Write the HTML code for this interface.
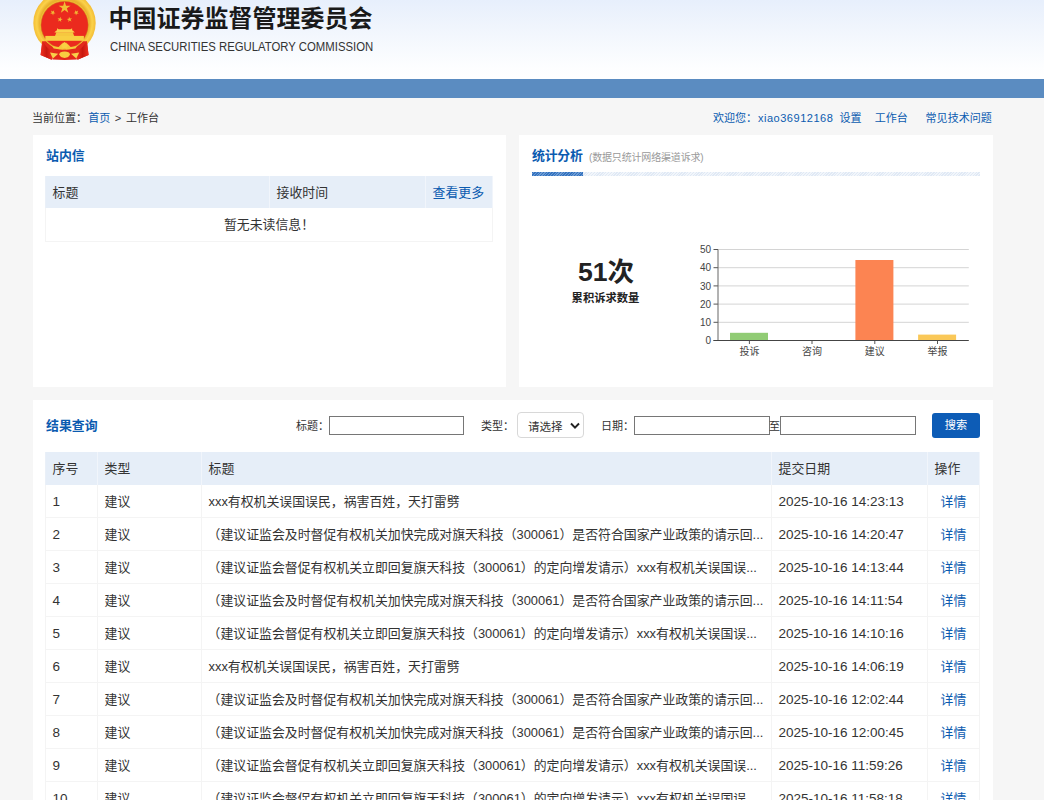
<!DOCTYPE html>
<html lang="zh-CN">
<head>
<meta charset="utf-8">
<title>中国证券监督管理委员会 - 工作台</title>
<style>
*{box-sizing:border-box;margin:0;padding:0}
html,body{width:1044px;height:800px;overflow:hidden}
body{position:relative;background:#f6f6f6;font-family:"Liberation Sans","Noto Sans CJK SC",sans-serif;font-size:13px;color:#333}
a{color:#0b5bb0;text-decoration:none}
.abs{position:absolute;white-space:nowrap}
#hdr{left:0;top:0;width:1044px;height:79px;background:linear-gradient(180deg,#e7effc 0%,#f3f7fd 45%,#fdfeff 85%,#ffffff 100%)}
#bar{left:0;top:79px;width:1044px;height:19px;background:#5b8cc1}
#ttl{left:108.5px;top:1.5px;font-size:24px;line-height:34px;font-weight:bold;color:#1a1a1a;letter-spacing:0}
#sub{left:110px;top:38.7px;font-size:12px;line-height:16px;color:#333;letter-spacing:0;transform-origin:0 0;transform:scaleX(0.945)}
.crumb{font-size:11.04px;line-height:16px;top:109.5px}
.panel{background:#fff}
.ptitle{font-size:12.88px;line-height:18px;font-weight:bold;color:#0b5bb0}
table{border-collapse:separate;border-spacing:0;table-layout:fixed;font-size:12.88px}
th,td{height:33px;padding:0 0 0 6.5px;text-align:left;font-weight:normal;border-right:1px solid #f4f4f4;border-bottom:1px solid #f4f4f4;white-space:nowrap;overflow:hidden;vertical-align:middle;line-height:18px}
th{height:33px;background:#e6eef8;border-right-color:#f1f5fb;border-bottom:none;color:#333}
td:first-child{border-left:1px solid #f4f4f4}
#res td{padding-top:1px}
th:first-child{border-left:1px solid #eaf0f8}
#msg th{height:32px;padding-top:1px}#msg td{height:34px}
td.op{text-align:center;padding:0}
td.dt{font-size:13.5px;letter-spacing:0}
#res td:first-child{font-size:13.5px}
.lbl{font-size:11.04px;line-height:16px;color:#333}
.inp{height:19px;border:1px solid #767676;background:#fff;border-radius:0;outline:none;font:inherit;font-size:11.04px;padding:0 2px;color:#333}
select.sel{appearance:none;-webkit-appearance:none;outline:none;font:inherit;font-size:11.5px;color:#333;padding:4px 0 0 10px;line-height:16px}
button.btn{border:none;outline:none;font:inherit;cursor:pointer;padding:0}
</style>
</head>
<body>
<div id="hdr" class="abs"></div>
<div id="bar" class="abs"></div>
<!--emblem--><svg class="abs" style="left:30px;top:0" width="70" height="64" viewBox="30 0 70 64">
<defs>
<radialGradient id="gd" cx="64.5" cy="23" r="31.5" gradientUnits="userSpaceOnUse"><stop offset="0.78" stop-color="#e9b22e"/><stop offset="0.88" stop-color="#fbd24a"/><stop offset="1" stop-color="#f3bb33"/></radialGradient>
<linearGradient id="rd" x1="0" y1="0" x2="1" y2="0"><stop offset="0" stop-color="#f0301f"/><stop offset="0.5" stop-color="#c8190f"/><stop offset="1" stop-color="#f0301f"/></linearGradient>
</defs>
<circle cx="64.5" cy="23" r="31.2" fill="url(#gd)"/>
<path d="M42.3 41.3 L40.6 55 L51.7 59.7 L52.5 58 L76.7 58 L77.5 59.7 L88.6 55 L86.9 41.3 Z" fill="#e22a1c"/>
<path d="M42.3 41.3 L40.6 55 L51.7 59.7 L52.6 52 Q46.5 48 42.3 41.3 Z" fill="url(#rd)"/>
<path d="M86.9 41.3 L88.6 55 L77.5 59.7 L76.6 52 Q82.7 48 86.9 41.3 Z" fill="url(#rd)"/>
<path d="M52 52 Q64.6 57.5 77.2 52 L76.8 59.6 Q64.6 60.4 52.4 59.6 Z" fill="#e3271b"/>
<circle cx="64.5" cy="25" r="24.7" fill="#f4c136"/>
<circle cx="64.6" cy="25" r="23.7" fill="#eb2a1e" stroke="#c9901f" stroke-width="0.5"/>
<polygon points="64.60,1.30 66.01,5.65 70.59,5.65 66.89,8.34 68.30,12.70 64.60,10.01 60.90,12.70 62.31,8.34 58.61,5.65 63.19,5.65" fill="#f1bd36"/>
<polygon points="54.20,10.18 53.78,12.16 55.54,13.18 53.52,13.39 53.09,15.38 52.27,13.53 50.24,13.74 51.75,12.38 50.93,10.52 52.69,11.54" fill="#f1bd36"/>
<polygon points="74.90,10.18 76.41,11.54 78.17,10.52 77.35,12.38 78.86,13.74 76.83,13.53 76.01,15.38 75.58,13.39 73.56,13.18 75.32,12.16" fill="#f1bd36"/>
<polygon points="60.49,16.74 60.77,18.76 62.77,19.11 60.94,20.00 61.23,22.02 59.81,20.55 57.99,21.45 58.94,19.65 57.53,18.19 59.53,18.54" fill="#f1bd36"/>
<polygon points="69.01,16.74 69.97,18.54 71.97,18.19 70.56,19.65 71.51,21.45 69.69,20.55 68.27,22.02 68.56,20.00 66.73,19.11 68.73,18.76" fill="#f1bd36"/>
<rect x="45.3" y="35.9" width="38.6" height="4.9" fill="#f8cf43"/>
<path d="M55 35.9 L56.4 32.2 L72.8 32.2 L74.2 35.9 Z" fill="#f6c83f"/>
<path d="M54.4 32.6 L56.3 30.6 L57 30.6 L57.1 28.3 L58.6 29.3 L70.6 29.3 L72.1 28.3 L72.2 30.6 L72.9 30.6 L74.8 32.6 Z" fill="#fad24a"/>
<path d="M52 46 L58.6 46.9 L61 44.4 L64.6 42.3 L68.2 44.4 L70.6 46.9 L77.2 46 L75.5 48.6 Q70 49.6 66.2 49.6 L64.6 48.6 L63 49.6 Q59 49.6 53.7 48.6 Z" fill="#f6c83c"/>
<polygon points="68.10,45.60 67.11,46.27 67.63,47.35 66.44,47.44 66.35,48.63 65.27,48.11 64.60,49.10 63.93,48.11 62.85,48.63 62.76,47.44 61.57,47.35 62.09,46.27 61.10,45.60 62.09,44.93 61.57,43.85 62.76,43.76 62.85,42.57 63.93,43.09 64.60,42.10 65.27,43.09 66.35,42.57 66.44,43.76 67.63,43.85 67.11,44.93" fill="#f9d143"/>
<path d="M59.3 54.2 Q59.6 51.8 64.6 51.6 Q69.6 51.8 69.9 54.2 L69.2 56 L67.6 57.3 L64.6 58 L61.6 57.3 L60 56 Z" fill="#f8cd40"/>
<path d="M50 52.5 L58.2 53.7 L52.9 58.4 Z" fill="#f8d04a"/>
<path d="M79.2 52.5 L71 53.7 L76.3 58.4 Z" fill="#f8d04a"/>
</svg>
<!--/emblem-->
<div id="ttl" class="abs">中国证券监督管理委员会</div>
<div id="sub" class="abs">CHINA SECURITIES REGULATORY COMMISSION</div>

<div class="abs crumb" style="left:32px">当前位置：</div>
<div class="abs crumb" style="left:88.3px"><a>首页</a></div>
<div class="abs crumb" style="left:114.7px">&gt;</div>
<div class="abs crumb" style="left:126px">工作台</div>
<div class="abs crumb" style="left:713px"><a>欢迎您：</a></div>
<div class="abs crumb" style="left:758px;letter-spacing:0.5px"><a>xiao36912168</a></div>
<div class="abs crumb" style="left:839.5px"><a>设置</a></div>
<div class="abs crumb" style="left:874.7px"><a>工作台</a></div>
<div class="abs crumb" style="left:925.6px"><a>常见技术问题</a></div>

<!-- panel 1 -->
<div class="abs panel" style="left:33px;top:135px;width:473px;height:252px"></div>
<div class="abs ptitle" style="left:46px;top:146.7px">站内信</div>
<table class="abs" id="msg" style="left:45px;top:176px;width:448px">
<colgroup><col style="width:225px"><col style="width:156px"><col style="width:67px"></colgroup>
<tr><th>标题</th><th>接收时间</th><th><a>查看更多</a></th></tr>
<tr><td colspan="3" style="text-align:center;padding:0">暂无未读信息！</td></tr>
</table>

<!-- panel 2 -->
<div class="abs panel" style="left:519px;top:135px;width:474px;height:252px"></div>
<div class="abs ptitle" style="left:532px;top:146.7px;letter-spacing:-0.25px">统计分析</div>
<div class="abs" style="left:589px;top:150.8px;font-size:10px;line-height:14px;color:#999;letter-spacing:-0.17px">(数据只统计网络渠道诉求)</div>

<div class="abs" style="left:532px;top:172px;width:448px;height:4px;background:repeating-linear-gradient(135deg,#e0e9f5 0,#e0e9f5 1px,#f2f6fb 1px,#f2f6fb 2px)"></div>
<div class="abs" style="left:532px;top:172px;width:51px;height:4px;background:repeating-linear-gradient(135deg,#3473c0 0,#3473c0 1px,#6d9bd3 1px,#6d9bd3 2px)"></div>
<div class="abs" style="left:556px;top:254px;width:100px;text-align:center;font-size:26.6px;line-height:36px;font-weight:bold;color:#222">51次</div>
<div class="abs" style="left:555.5px;top:289.6px;width:100px;text-align:center;font-size:11.3px;line-height:16px;font-weight:bold;color:#222">累积诉求数量</div>
<svg class="abs" id="chart" style="left:680px;top:235px" width="310" height="135" viewBox="680 235 310 135" font-family="'Liberation Sans','Noto Sans CJK SC',sans-serif" font-size="10" fill="#444">
<line x1="718" x2="968.8" y1="249.5" y2="249.5" stroke="#d4d4d4" stroke-width="1"/>
<line x1="713.5" x2="718" y1="249.5" y2="249.5" stroke="#555" stroke-width="1"/>
<text x="711" y="253.1" text-anchor="end">50</text>
<line x1="718" x2="968.8" y1="267.7" y2="267.7" stroke="#d4d4d4" stroke-width="1"/>
<line x1="713.5" x2="718" y1="267.7" y2="267.7" stroke="#555" stroke-width="1"/>
<text x="711" y="271.3" text-anchor="end">40</text>
<line x1="718" x2="968.8" y1="285.9" y2="285.9" stroke="#d4d4d4" stroke-width="1"/>
<line x1="713.5" x2="718" y1="285.9" y2="285.9" stroke="#555" stroke-width="1"/>
<text x="711" y="289.5" text-anchor="end">30</text>
<line x1="718" x2="968.8" y1="304.1" y2="304.1" stroke="#d4d4d4" stroke-width="1"/>
<line x1="713.5" x2="718" y1="304.1" y2="304.1" stroke="#555" stroke-width="1"/>
<text x="711" y="307.7" text-anchor="end">20</text>
<line x1="718" x2="968.8" y1="322.3" y2="322.3" stroke="#d4d4d4" stroke-width="1"/>
<line x1="713.5" x2="718" y1="322.3" y2="322.3" stroke="#555" stroke-width="1"/>
<text x="711" y="325.9" text-anchor="end">10</text>
<line x1="713.5" x2="718" y1="340.5" y2="340.5" stroke="#555" stroke-width="1"/>
<text x="711" y="344.1" text-anchor="end">0</text>
<line x1="718" x2="718" y1="249.5" y2="340.5" stroke="#666" stroke-width="1"/>
<rect x="730.0" y="332.8" width="38" height="7.7" fill="#91cc75"/>
<line x1="749.4" x2="749.4" y1="340.5" y2="344.0" stroke="#555" stroke-width="1"/>
<text x="749.4" y="354.5" text-anchor="middle">投诉</text>
<line x1="812.0" x2="812.0" y1="340.5" y2="344.0" stroke="#555" stroke-width="1"/>
<text x="812.0" y="354.5" text-anchor="middle">咨询</text>
<rect x="855.4" y="260.0" width="38" height="80.5" fill="#fc8452"/>
<line x1="874.8" x2="874.8" y1="340.5" y2="344.0" stroke="#555" stroke-width="1"/>
<text x="874.8" y="354.5" text-anchor="middle">建议</text>
<rect x="918.1" y="334.6" width="38" height="5.9" fill="#fac858"/>
<line x1="937.5" x2="937.5" y1="340.5" y2="344.0" stroke="#555" stroke-width="1"/>
<text x="937.5" y="354.5" text-anchor="middle">举报</text>
<line x1="713.5" x2="968.8" y1="340.5" y2="340.5" stroke="#444" stroke-width="1"/>
</svg>
<!-- panel 3 -->
<div class="abs panel" style="left:33px;top:400px;width:960px;height:400px"></div>
<div class="abs ptitle" style="left:46px;top:417px">结果查询</div>

<div class="abs lbl" style="left:296px;top:418px">标题：</div>
<input type="text" class="abs inp" style="left:329px;top:416px;width:135px">
<div class="abs lbl" style="left:481px;top:418px">类型：</div>
<select class="abs sel" style="left:517px;top:412px;width:67px;height:26px;border:1px solid #d8d8d8;border-radius:4px;background:#fff"><option>请选择</option><option>投诉</option><option>咨询</option><option>建议</option><option>举报</option></select>
<svg class="abs" style="left:568.8px;top:420.5px" width="12" height="10" viewBox="0 0 12 10"><path d="M2 2.5 L6 6.7 L10 2.5" fill="none" stroke="#222" stroke-width="1.9"/></svg>
<div class="abs lbl" style="left:601px;top:418px">日期：</div>
<input type="text" class="abs inp" style="left:634px;top:416px;width:136px">
<div class="abs lbl" style="left:769px;top:418px">至</div>
<input type="text" class="abs inp" style="left:780px;top:416px;width:136px">
<button type="button" class="abs btn" style="left:932px;top:413px;width:48px;height:25px;border-radius:3px;background:#0d5cb6;color:#fff;font-size:11.2px;line-height:25px;text-align:center">搜索</button>
<table class="abs" id="res" style="left:45px;top:452px;width:935px">
<colgroup><col style="width:53px"><col style="width:104px"><col style="width:570px"><col style="width:156px"><col style="width:52px"></colgroup>
<tr><th>序号</th><th>类型</th><th>标题</th><th>提交日期</th><th>操作</th></tr>
<tr><td>1</td><td>建议</td><td class="ti">xxx有权机关误国误民，祸害百姓，天打雷劈</td><td class="dt">2025-10-16 14:23:13</td><td class="op"><a>详情</a></td></tr>
<tr><td>2</td><td>建议</td><td class="ti" style="text-indent:-1px">（建议证监会及时督促有权机关加快完成对旗天科技（300061）是否符合国家产业政策的请示回...</td><td class="dt">2025-10-16 14:20:47</td><td class="op"><a>详情</a></td></tr>
<tr><td>3</td><td>建议</td><td class="ti" style="text-indent:-1px">（建议证监会督促有权机关立即回复旗天科技（300061）的定向增发请示）xxx有权机关误国误...</td><td class="dt">2025-10-16 14:13:44</td><td class="op"><a>详情</a></td></tr>
<tr><td>4</td><td>建议</td><td class="ti" style="text-indent:-1px">（建议证监会及时督促有权机关加快完成对旗天科技（300061）是否符合国家产业政策的请示回...</td><td class="dt">2025-10-16 14:11:54</td><td class="op"><a>详情</a></td></tr>
<tr><td>5</td><td>建议</td><td class="ti" style="text-indent:-1px">（建议证监会督促有权机关立即回复旗天科技（300061）的定向增发请示）xxx有权机关误国误...</td><td class="dt">2025-10-16 14:10:16</td><td class="op"><a>详情</a></td></tr>
<tr><td>6</td><td>建议</td><td class="ti">xxx有权机关误国误民，祸害百姓，天打雷劈</td><td class="dt">2025-10-16 14:06:19</td><td class="op"><a>详情</a></td></tr>
<tr><td>7</td><td>建议</td><td class="ti" style="text-indent:-1px">（建议证监会及时督促有权机关加快完成对旗天科技（300061）是否符合国家产业政策的请示回...</td><td class="dt">2025-10-16 12:02:44</td><td class="op"><a>详情</a></td></tr>
<tr><td>8</td><td>建议</td><td class="ti" style="text-indent:-1px">（建议证监会及时督促有权机关加快完成对旗天科技（300061）是否符合国家产业政策的请示回...</td><td class="dt">2025-10-16 12:00:45</td><td class="op"><a>详情</a></td></tr>
<tr><td>9</td><td>建议</td><td class="ti" style="text-indent:-1px">（建议证监会督促有权机关立即回复旗天科技（300061）的定向增发请示）xxx有权机关误国误...</td><td class="dt">2025-10-16 11:59:26</td><td class="op"><a>详情</a></td></tr>
<tr><td>10</td><td>建议</td><td class="ti" style="text-indent:-1px">（建议证监会督促有权机关立即回复旗天科技（300061）的定向增发请示）xxx有权机关误国误...</td><td class="dt">2025-10-16 11:58:18</td><td class="op"><a>详情</a></td></tr>
</table>
</body>
</html>
